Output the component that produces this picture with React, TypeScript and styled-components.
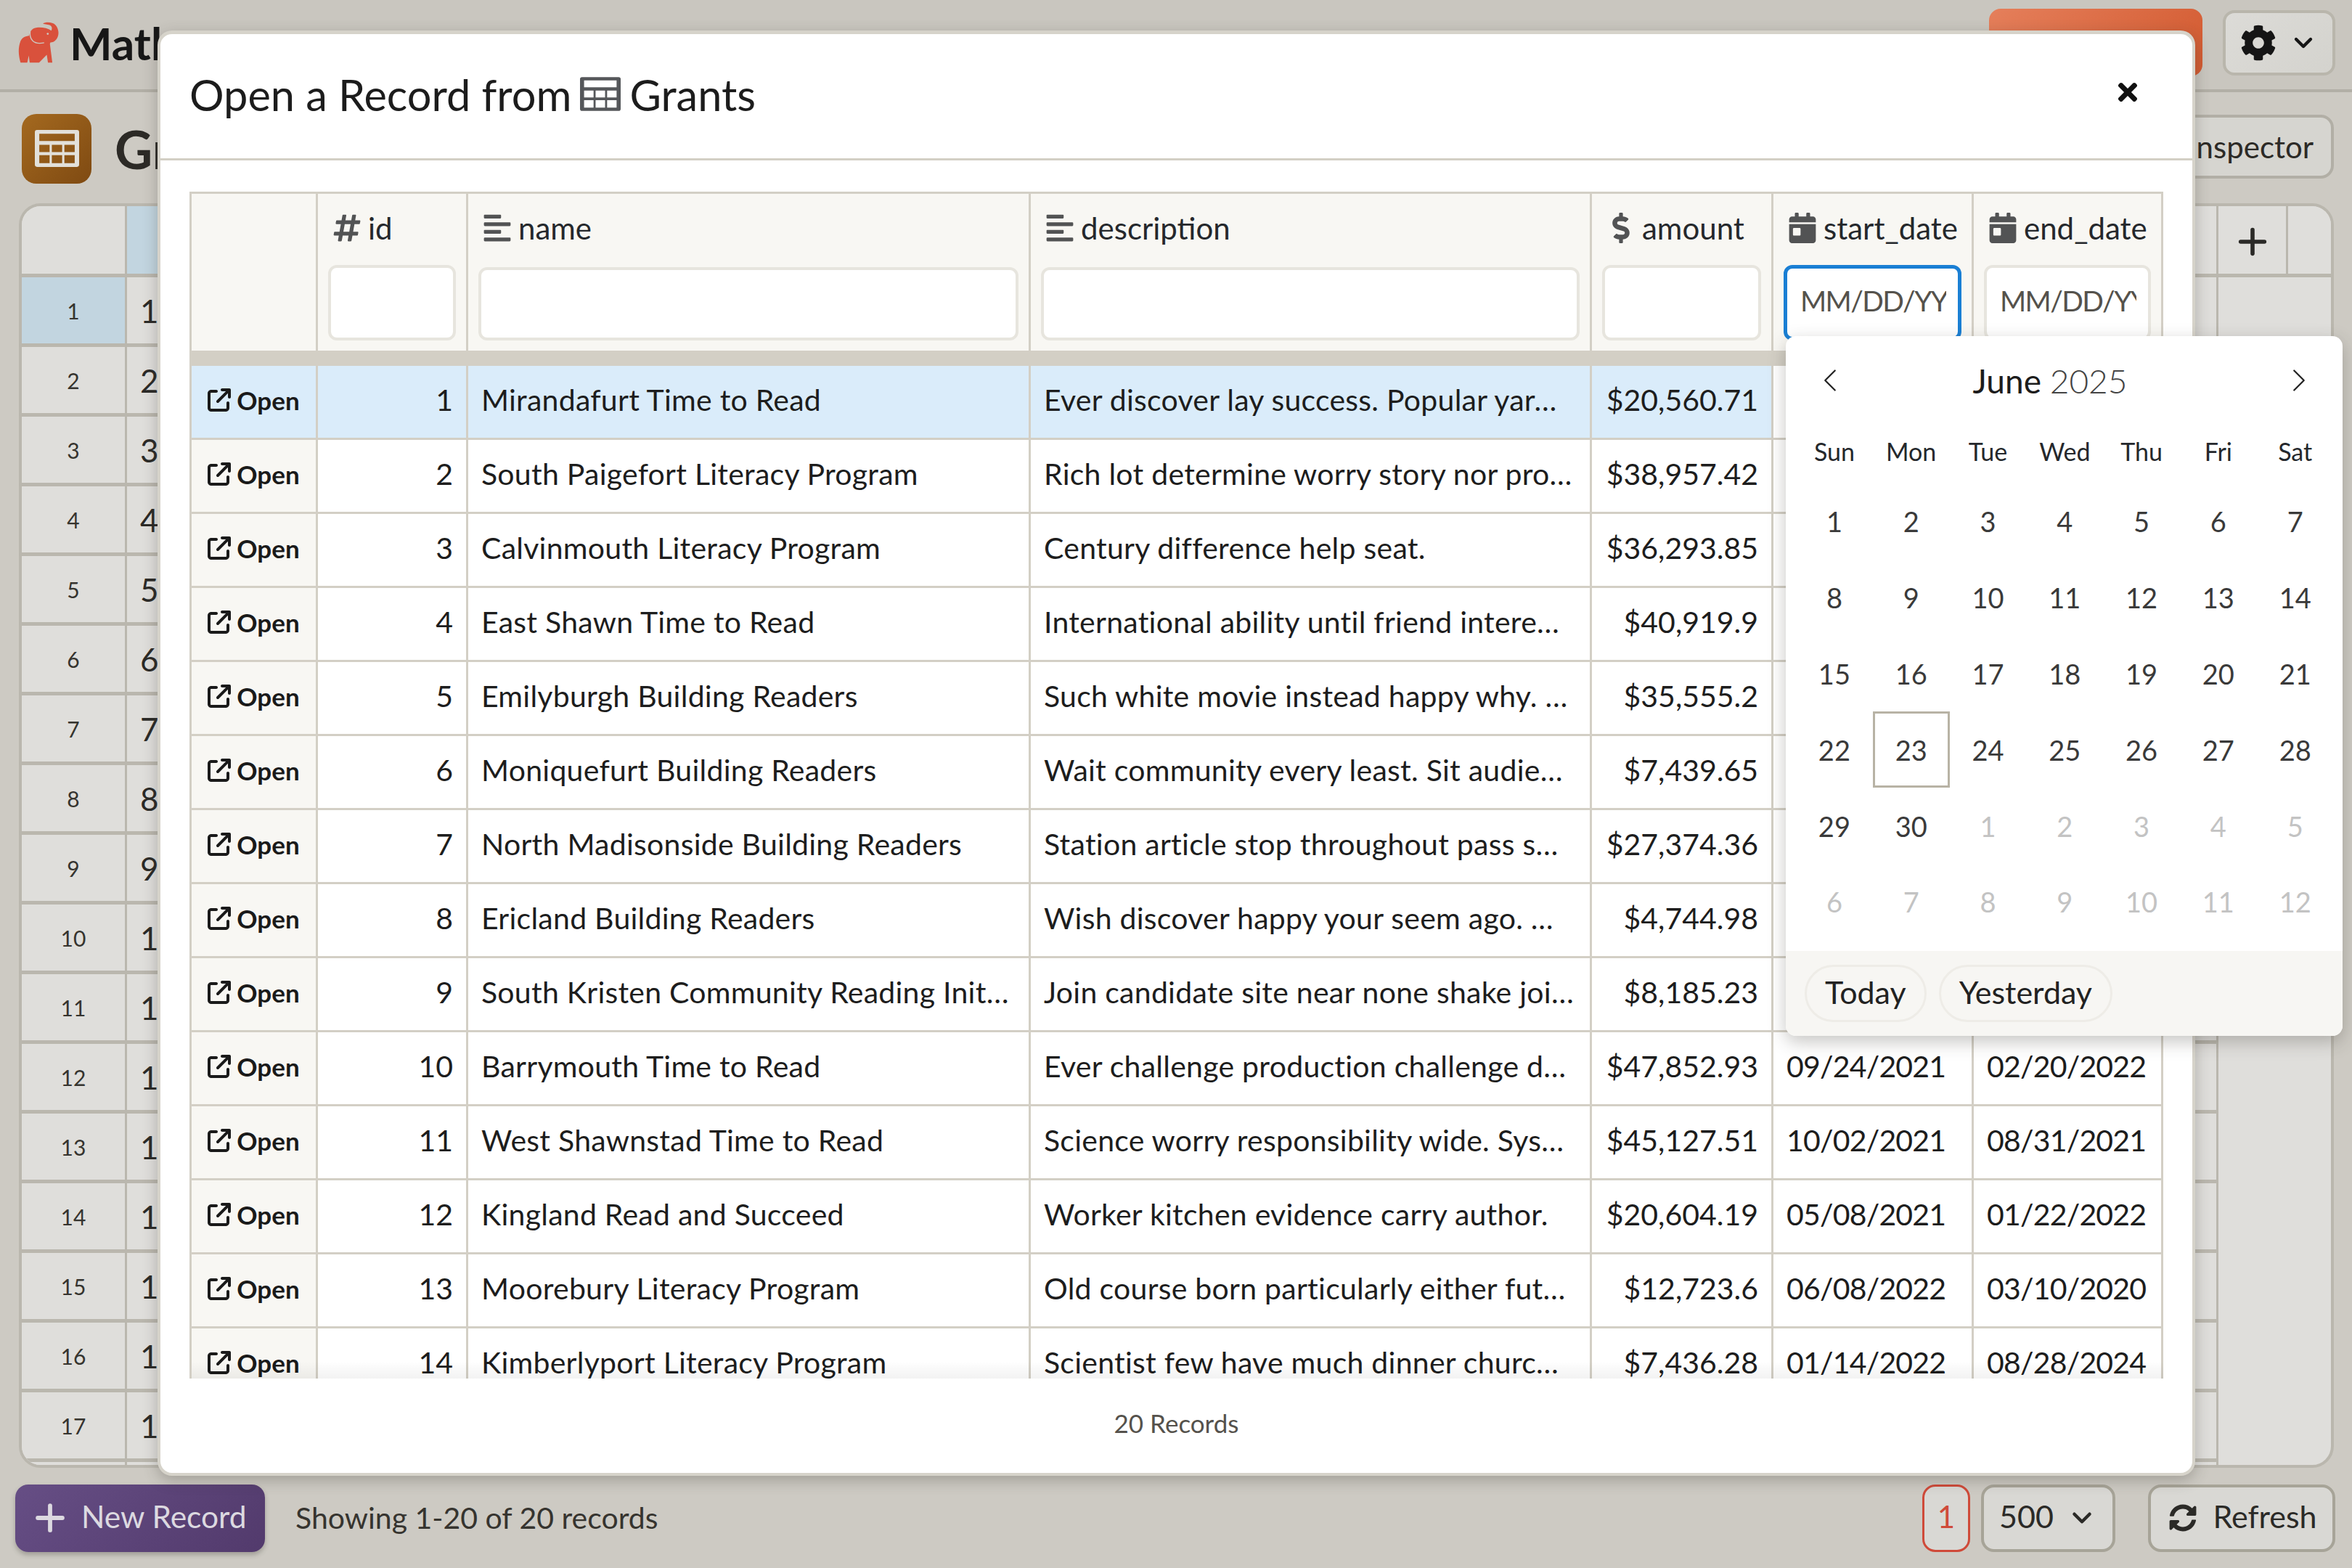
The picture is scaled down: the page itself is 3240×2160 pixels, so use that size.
import { createGlobalStyle, styled } from "styled-components";
import {
  FaAlignLeft,
  FaCalendarDay,
  FaCog,
  FaDollarSign,
  FaHashtag,
  FaSyncAlt,
  FaTimes,
} from "react-icons/fa";
import { FaArrowUpRightFromSquare } from "react-icons/fa6";
import { LuChevronDown, LuChevronLeft, LuChevronRight, LuPlus } from "react-icons/lu";

const FONT = `"Lato", "Noto Sans", sans-serif`;

const COLUMNS = "174px 207px 775px 773px 250px 276px 261px";

type Grant = {
  id: number;
  name: string;
  description: string;
  amount: string;
  start?: string;
  end?: string;
};

const GRANTS: Grant[] = [
  { id: 1, name: "Mirandafurt Time to Read", description: "Ever discover lay success. Popular yar…", amount: "$20,560.71" },
  { id: 2, name: "South Paigefort Literacy Program", description: "Rich lot determine worry story nor pro…", amount: "$38,957.42" },
  { id: 3, name: "Calvinmouth Literacy Program", description: "Century difference help seat.", amount: "$36,293.85" },
  { id: 4, name: "East Shawn Time to Read", description: "International ability until friend intere…", amount: "$40,919.9" },
  { id: 5, name: "Emilyburgh Building Readers", description: "Such white movie instead happy why. …", amount: "$35,555.2" },
  { id: 6, name: "Moniquefurt Building Readers", description: "Wait community every least. Sit audie…", amount: "$7,439.65" },
  { id: 7, name: "North Madisonside Building Readers", description: "Station article stop throughout pass s…", amount: "$27,374.36" },
  { id: 8, name: "Ericland Building Readers", description: "Wish discover happy your seem ago. …", amount: "$4,744.98" },
  { id: 9, name: "South Kristen Community Reading Init…", description: "Join candidate site near none shake joi…", amount: "$8,185.23" },
  { id: 10, name: "Barrymouth Time to Read", description: "Ever challenge production challenge d…", amount: "$47,852.93", start: "09/24/2021", end: "02/20/2022" },
  { id: 11, name: "West Shawnstad Time to Read", description: "Science worry responsibility wide. Sys…", amount: "$45,127.51", start: "10/02/2021", end: "08/31/2021" },
  { id: 12, name: "Kingland Read and Succeed", description: "Worker kitchen evidence carry author.", amount: "$20,604.19", start: "05/08/2021", end: "01/22/2022" },
  { id: 13, name: "Moorebury Literacy Program", description: "Old course born particularly either fut…", amount: "$12,723.6", start: "06/08/2022", end: "03/10/2020" },
  { id: 14, name: "Kimberlyport Literacy Program", description: "Scientist few have much dinner churc…", amount: "$7,436.28", start: "01/14/2022", end: "08/28/2024" },
];

const WEEKDAYS = ["Sun", "Mon", "Tue", "Wed", "Thu", "Fri", "Sat"];

const DAYS = [
  ...Array.from({ length: 30 }, (_, i) => ({ day: i + 1, muted: false })),
  ...Array.from({ length: 12 }, (_, i) => ({ day: i + 1, muted: true })),
];

const GlobalStyle = createGlobalStyle`
  html, body {
    margin: 0;
    padding: 0;
    background: #cdcac3;
  }

  * {
    box-sizing: border-box;
  }
`;

const Page = styled.div`
  position: relative;
  width: 3240px;
  height: 2160px;
  overflow: hidden;
  display: flex;
  flex-direction: column;
  background: #cdcac3;
  color: #2b2a27;
  font-family: ${FONT};
`;

const TopBar = styled.header`
  flex: 0 0 127px;
  display: flex;
  align-items: center;
  padding: 0 23px 6px 25px;
  background: #c9c6bf;
  border-bottom: 4px solid #b2afa6;
`;

const Brand = styled.div`
  display: flex;
  align-items: center;
  gap: 14px;
  font-size: 62px;
  font-weight: 700;
  color: #171717;
  flex: 1;
`;

const UpdateButton = styled.button`
  width: 294px;
  height: 93px;
  margin-right: 28px;
  border: none;
  border-radius: 16px;
  background: linear-gradient(135deg, #e57f5b, #d2592f);
`;

const MenuButton = styled.button`
  width: 155px;
  height: 90px;
  display: flex;
  align-items: center;
  justify-content: center;
  gap: 17px;
  border: 4px solid #b9b6ac;
  border-radius: 16px;
  background: linear-gradient(135deg, #dcdbd7, #d4d3ce);
  color: #151515;
  font-size: 50px;
`;

const TitleBar = styled.div`
  flex: 0 0 155px;
  display: flex;
  align-items: center;
  padding: 0 25px 0 30px;
  gap: 32px;
`;

const TableBadge = styled.div`
  width: 96px;
  height: 96px;
  display: flex;
  align-items: center;
  justify-content: center;
  border-radius: 20px;
  background: linear-gradient(135deg, #a4691f, #7f4a12);
  color: #e2e0da;
`;

const SheetTitle = styled.h1`
  flex: 1;
  margin: 0;
  font-size: 72px;
  font-weight: 700;
  color: #2c2a26;
`;

const InspectorButton = styled.button`
  width: 320px;
  height: 88px;
  margin-bottom: 6px;
  padding: 0 24px;
  border: 4px solid #b2afa6;
  border-radius: 18px;
  background: #d6d5d0;
  color: #2c2a26;
  font-family: ${FONT};
  font-size: 42px;
  text-align: right;
`;

const Sheet = styled.div`
  flex: 0 0 1742px;
  margin: -2px 25px 0 26px;
  overflow: hidden;
  border: 4px solid #bab7ae;
  border-radius: 30px;
  background: #dfdedb;
`;

const SheetHead = styled.div`
  height: 98px;
  display: grid;
  grid-template-columns: 145px 220px 1fr 96px 59px;
  border-bottom: 5px solid #bab7ae;
`;

const SheetHeadCell = styled.div<{ $tint?: boolean }>`
  display: flex;
  align-items: center;
  justify-content: center;
  padding-top: 4px;
  border-right: 3px solid #bab7ae;
  background: ${(p) => (p.$tint ? "#c2d5e0" : "#dfdedb")};
  color: #2b2a27;

  &:last-child {
    border-right: none;
  }
`;

const SheetRow = styled.div`
  height: 96px;
  display: grid;
  grid-template-columns: 145px 1fr 155px;
`;

const RowNumber = styled.div<{ $active?: boolean }>`
  display: flex;
  align-items: center;
  justify-content: center;
  border-right: 3px solid #bab7ae;
  border-bottom: 5px solid #bab7ae;
  background: ${(p) => (p.$active ? "#c2d5e0" : "#dfdedb")};
  font-size: 30px;
  color: #36342f;
`;

const RowValue = styled.div`
  padding-left: 18px;
  display: flex;
  align-items: center;
  border-right: 3px solid #bab7ae;
  border-bottom: 5px solid #bab7ae;
  font-size: 44px;
  color: #2b2a27;
`;

const BottomBar = styled.footer`
  flex: 1;
  display: flex;
  align-items: center;
  padding: 0 23px 0 21px;
`;

const NewRecordButton = styled.button`
  width: 344px;
  height: 93px;
  display: flex;
  align-items: center;
  gap: 14px;
  padding: 0 0 0 19px;
  border: none;
  border-radius: 18px;
  background: linear-gradient(135deg, #664e85, #523a6c);
  color: #dcd9e0;
  font-family: ${FONT};
  font-size: 42.5px;
  white-space: nowrap;
  box-shadow: 0 4px 6px rgba(60, 55, 50, 0.3);

  span {
    padding-bottom: 5px;
  }
`;

const RecordCount = styled.div`
  flex: 1;
  margin: 0 0 2px 42px;
  font-size: 41px;
  color: #36342f;
`;

const PageButton = styled.button`
  width: 66px;
  height: 93px;
  margin-right: 15px;
  padding: 0 0 4px;
  border: 3px solid #cf4a39;
  border-radius: 18px;
  background: #d9d8d4;
  color: #cf4a39;
  font-family: ${FONT};
  font-size: 42px;
`;

const FooterButton = styled.button<{ $width: number; $gap: number; $left?: number }>`
  width: ${(p) => p.$width}px;
  height: 93px;
  margin-left: ${(p) => p.$left ?? 0}px;
  display: flex;
  align-items: center;
  justify-content: center;
  gap: ${(p) => p.$gap}px;
  border: 4px solid #a7a498;
  border-radius: 18px;
  background: #d9d8d4;
  color: #2b2a27;
  font-family: ${FONT};
  font-size: 43px;

  > svg {
    flex: none;
  }

  span {
    padding-bottom: 5px;
  }
`;

const RefreshIcon = styled(FaSyncAlt)`
  font-size: 38px;
  margin-left: 4px;
`;

const Modal = styled.section`
  position: absolute;
  left: 217px;
  top: 42px;
  width: 2807px;
  height: 1991px;
  display: flex;
  flex-direction: column;
  background: #ffffff;
  border: 4px solid #d6d3ca;
  border-top-width: 5px;
  border-radius: 20px;
  box-shadow: 0 6px 20px rgba(60, 55, 50, 0.3);
`;

const ModalHeader = styled.div`
  flex: 0 0 174px;
  display: flex;
  align-items: center;
  padding: 0 70px 0 40px;
  border-bottom: 3px solid #d3cfc5;
`;

const ModalTitle = styled.h2`
  flex: 1;
  display: flex;
  align-items: center;
  gap: 12px;
  margin: 0 0 6px;
  font-size: 59.5px;
  font-weight: 400;
  color: #1c1c1c;
`;

const CloseIcon = styled(FaTimes)`
  font-size: 38px;
  color: #111111;
  margin-bottom: 12px;
`;

const TableClip = styled.div`
  position: relative;
  flex: 0 0 1635px;
  margin: 43px 0 0 40px;
  width: 2719px;
  overflow: hidden;
  border-top: 3px solid #d3cfc5;
  border-left: 3px solid #d3cfc5;

  &::after {
    content: "";
    position: absolute;
    left: 0;
    right: 0;
    bottom: 0;
    height: 24px;
    background: linear-gradient(rgba(0, 0, 0, 0), rgba(0, 0, 0, 0.05));
  }
`;

const HeadRow = styled.div`
  display: grid;
  grid-template-columns: ${COLUMNS};
  height: 237px;
  border-bottom: 21px solid #d3cfc5;
`;

const HeadCell = styled.div`
  display: flex;
  flex-direction: column;
  padding: 8px 14px 14px;
  background: #f8f7f3;
  border-right: 3px solid #d3cfc5;
`;

const HeadLabel = styled.div`
  display: flex;
  align-items: center;
  gap: 8px;
  height: 78px;
  padding-left: 5px;
  font-size: 42px;
  color: #25282c;
  white-space: nowrap;
`;

const HeadIcon = styled.span`
  display: flex;
  font-size: 42px;
  color: #525354;
`;

const FilterInput = styled.div<{ $focus?: boolean; $height?: number }>`
  height: ${(p) => p.$height ?? 104}px;
  margin-top: auto;
  padding: 0 16px 6px 18px;
  display: flex;
  align-items: center;
  overflow: hidden;
  white-space: nowrap;
  background: #ffffff;
  border: ${(p) => (p.$focus ? "5px solid #1a7fd4" : "4px solid #e7e5de")};
  border-radius: 12px;
  color: #55524c;
  font-size: 39px;
  letter-spacing: -1.6px;

  span {
    overflow: hidden;
  }
`;

const Row = styled.div`
  display: grid;
  grid-template-columns: ${COLUMNS};
  height: 102px;
`;

const Cell = styled.div<{ $right?: boolean; $active?: boolean }>`
  padding: 0 18px;
  line-height: 93px;
  overflow: hidden;
  white-space: nowrap;
  text-align: ${(p) => (p.$right ? "right" : "left")};
  letter-spacing: ${(p) => (p.$right ? "0" : "0.25px")};
  background: ${(p) => (p.$active ? "#daecfa" : "#ffffff")};
  border-right: 3px solid #d3cfc5;
  border-bottom: 3px solid #d3cfc5;
  color: #1d1d1d;
  font-size: 41px;
`;

const DateCell = styled(Cell)`
  letter-spacing: -0.8px;
`;

const OpenCell = styled.div<{ $active?: boolean }>`
  display: flex;
  align-items: center;
  justify-content: center;
  gap: 8px;
  padding: 0 0 6px;
  background: ${(p) => (p.$active ? "#daecfa" : "#f8f7f3")};
  border-right: 3px solid #d3cfc5;
  border-bottom: 3px solid #d3cfc5;
  color: #1a1a1a;
  font-size: 35px;
  font-weight: 700;

  > svg {
    font-size: 32px;
  }
`;

const ModalFooter = styled.div`
  flex: 1;
  display: flex;
  align-items: center;
  justify-content: center;
  padding-bottom: 8px;
  color: #55524c;
  font-size: 35px;
`;

const DatePopup = styled.div`
  position: absolute;
  left: 2460px;
  top: 463px;
  width: 767px;
  height: 964px;
  display: flex;
  flex-direction: column;
  background: #ffffff;
  border-radius: 14px;
  box-shadow: 0 8px 24px rgba(50, 45, 40, 0.28);
  overflow: hidden;
`;

const MonthBar = styled.div`
  flex: 0 0 122px;
  display: flex;
  align-items: center;
  justify-content: space-between;
  padding: 0 33px 0 34px;
  font-size: 54px;
  color: #222222;

  svg {
    stroke-width: 1;
  }
`;

const MonthLabel = styled.div`
  margin-right: 40px;
  font-size: 46px;
  color: #1c1c1c;

  span {
    font-weight: 300;
    color: #444444;
  }
`;

const WeekGrid = styled.div`
  padding: 0 14px;
  display: grid;
  grid-template-columns: repeat(7, 105.8px);
  grid-template-rows: 81px repeat(6, 104.8px);
`;

const WeekdayCell = styled.div`
  height: 72px;
  display: flex;
  align-items: center;
  justify-content: center;
  font-size: 34px;
  color: #25282c;
`;

const DayCell = styled.div<{ $muted?: boolean; $today?: boolean }>`
  display: flex;
  align-items: center;
  justify-content: center;
  font-size: 38px;
  color: ${(p) => (p.$muted ? "#c3c3c3" : "#3a3a3a")};
  border: ${(p) => (p.$today ? "3px solid #b8b3a5" : "none")};
`;

const PopupFooter = styled.div`
  margin-top: auto;
  flex: 0 0 117px;
  display: flex;
  align-items: center;
  gap: 17px;
  padding: 0 26px;
  background: #f7f6f3;
`;

const Pill = styled.button`
  height: 79px;
  padding: 0 25px 4px;
  border: 3px solid #eeece7;
  border-radius: 40px;
  background: #f7f6f3;
  color: #222222;
  font-family: ${FONT};
  font-size: 43px;
`;

const TableIcon = ({ width, height, color }: { width: number; height: number; color: string }) => (
  <svg width={width} height={height} viewBox="0 0 60 50" fill={color} fillRule="evenodd">
    <path d="M3 0h54a3 3 0 0 1 3 3v44a3 3 0 0 1-3 3H3a3 3 0 0 1-3-3V3a3 3 0 0 1 3-3zM6 5v10h48V5zM6 20v10h14V20zM23 20v10h14V20zM40 20v10h14V20zM6 34v11h14V34zM23 34v11h14V34zM40 34v11h14V34z" />
  </svg>
);

const ElephantLogo = () => (
  <svg width="57" height="57" viewBox="42 38 172 172">
    <path
      fill="#d9513c"
      d="M52 208C44 180 40 150 52 118c6-14 20-21 36-22 2-16 10-32 32-34 20-2 45 2 60 13 6-15 0-23-15-25l-20-4c10-8 40-8 53 6 14 16 16 43 2 60-8 10-16 12-24 12l-2 6 10 78h-18l-5-33-32 33H90l-4-30-6 30z"
    />
    <path fill="none" stroke="#cdcac3" strokeWidth="4" d="M92 78c-4 32 13 57 58 47" />
    <circle cx="165" cy="88" r="4" fill="#cdcac3" />
  </svg>
);

const CalendarGlyph = () => (
  <HeadIcon>
    <FaCalendarDay />
  </HeadIcon>
);

const TextGlyph = () => (
  <HeadIcon>
    <FaAlignLeft />
  </HeadIcon>
);

export default function App() {
  return (
    <Page>
      <GlobalStyle />
      <TopBar>
        <Brand>
          <ElephantLogo />
          Mathesar
        </Brand>
        <UpdateButton />
        <MenuButton>
          <FaCog />
          <LuChevronDown size={40} strokeWidth={2.6} />
        </MenuButton>
      </TopBar>
      <TitleBar>
        <TableBadge>
          <TableIcon width={61} height={51} color="#e2e0da" />
        </TableBadge>
        <SheetTitle>Grants</SheetTitle>
        <InspectorButton>Inspector</InspectorButton>
      </TitleBar>
      <Sheet>
        <SheetHead>
          <SheetHeadCell />
          <SheetHeadCell $tint />
          <SheetHeadCell />
          <SheetHeadCell>
            <LuPlus size={56} strokeWidth={2.4} />
          </SheetHeadCell>
          <SheetHeadCell />
        </SheetHead>
        {Array.from({ length: 18 }, (_, i) => (
          <SheetRow key={i}>
            <RowNumber $active={i === 0}>{i + 1}</RowNumber>
            <RowValue>{i + 1}</RowValue>
          </SheetRow>
        ))}
      </Sheet>
      <BottomBar>
        <NewRecordButton>
          <LuPlus size={58} strokeWidth={2.4} />
          <span>New Record</span>
        </NewRecordButton>
        <RecordCount>Showing 1-20 of 20 records</RecordCount>
        <PageButton>1</PageButton>
        <FooterButton $width={185} $gap={18}>
          <span>500</span>
          <LuChevronDown size={42} strokeWidth={2.6} />
        </FooterButton>
        <FooterButton $width={258} $gap={22} $left={45}>
          <RefreshIcon />
          <span>Refresh</span>
        </FooterButton>
      </BottomBar>

      <Modal>
        <ModalHeader>
          <ModalTitle>
            Open a Record from <TableIcon width={56} height={47} color="#55575a" /> Grants
          </ModalTitle>
          <CloseIcon />
        </ModalHeader>
        <TableClip>
          <HeadRow>
            <HeadCell />
            <HeadCell>
              <HeadLabel>
                <HeadIcon>
                  <FaHashtag />
                </HeadIcon>
                id
              </HeadLabel>
              <FilterInput />
            </HeadCell>
            <HeadCell>
              <HeadLabel>
                <TextGlyph />
                name
              </HeadLabel>
              <FilterInput $height={101} />
            </HeadCell>
            <HeadCell>
              <HeadLabel>
                <TextGlyph />
                description
              </HeadLabel>
              <FilterInput $height={101} />
            </HeadCell>
            <HeadCell>
              <HeadLabel>
                <HeadIcon>
                  <FaDollarSign />
                </HeadIcon>
                amount
              </HeadLabel>
              <FilterInput />
            </HeadCell>
            <HeadCell>
              <HeadLabel>
                <CalendarGlyph />
                start_date
              </HeadLabel>
              <FilterInput $focus>
                <span>MM/DD/YY</span>
              </FilterInput>
            </HeadCell>
            <HeadCell>
              <HeadLabel>
                <CalendarGlyph />
                end_date
              </HeadLabel>
              <FilterInput>
                <span>MM/DD/YY</span>
              </FilterInput>
            </HeadCell>
          </HeadRow>
          {GRANTS.map((grant, i) => (
            <Row key={grant.id}>
              <OpenCell $active={i === 0}>
                <FaArrowUpRightFromSquare />
                Open
              </OpenCell>
              <Cell $right $active={i === 0}>
                {grant.id}
              </Cell>
              <Cell $active={i === 0}>{grant.name}</Cell>
              <Cell $active={i === 0}>{grant.description}</Cell>
              <Cell $right $active={i === 0}>
                {grant.amount}
              </Cell>
              <DateCell>{grant.start}</DateCell>
              <DateCell>{grant.end}</DateCell>
            </Row>
          ))}
        </TableClip>
        <ModalFooter>20 Records</ModalFooter>
      </Modal>

      <DatePopup>
        <MonthBar>
          <LuChevronLeft />
          <MonthLabel>
            June <span>2025</span>
          </MonthLabel>
          <LuChevronRight />
        </MonthBar>
        <WeekGrid>
          {WEEKDAYS.map((d) => (
            <WeekdayCell key={d}>{d}</WeekdayCell>
          ))}
          {DAYS.map((d, i) => (
            <DayCell key={i} $muted={d.muted} $today={!d.muted && d.day === 23}>
              {d.day}
            </DayCell>
          ))}
        </WeekGrid>
        <PopupFooter>
          <Pill>Today</Pill>
          <Pill>Yesterday</Pill>
        </PopupFooter>
      </DatePopup>
    </Page>
  );
}
